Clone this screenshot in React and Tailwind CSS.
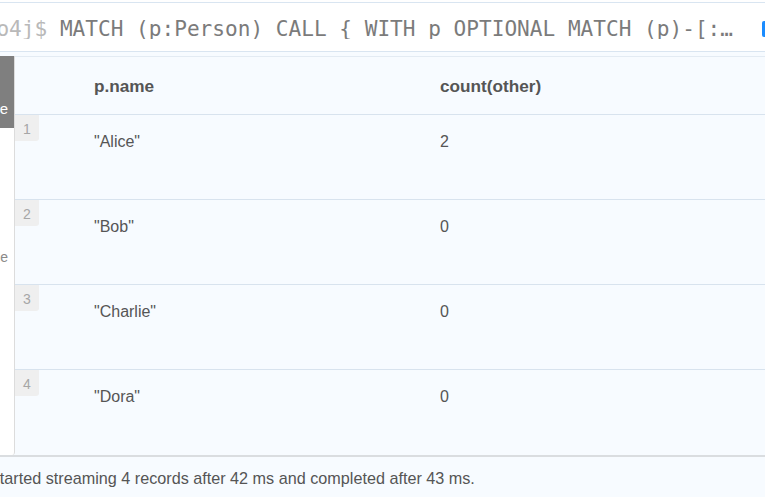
import React from 'react';

const rows = [
    { n: 1, name: '"Alice"', count: '2' },
    { n: 2, name: '"Bob"', count: '0' },
    { n: 3, name: '"Charlie"', count: '0' },
    { n: 4, name: '"Dora"', count: '0' },
];

export default function App() {
    return (
        <div className="w-[765px] h-[497px] overflow-hidden flex flex-col bg-[#f7fbff] font-['Liberation_Sans',Arial,sans-serif]">
            {/* Editor bar */}
            <div className="pt-[2px] bg-white shrink-0">
                <div className="h-[50px] border-t border-b border-[#d9e5f1] bg-white flex items-center overflow-hidden">
                    <div className="flex-1 overflow-hidden whitespace-nowrap font-['DejaVu_Sans_Mono',monospace] text-[21.1px] leading-none ml-[-29px] pt-[3px]">
                        <span className="text-[#b9b9b9]">neo4j$ </span>
                        <span className="text-[#7b7b7b]">MATCH (p:Person) CALL {'{'} WITH p OPTIONAL MATCH (p)-[:…</span>
                    </div>
                    <div className="w-[3px] h-[16px] bg-[#1a8cff] rounded-l-[2px] shrink-0 ml-[26px] mt-[4px]" />
                </div>
            </div>

            <div className="h-[4px] shrink-0" />

            {/* Main */}
            <div className="flex flex-1 min-h-0">
                <div className="w-[15px] shrink-0 flex flex-col bg-white border-r border-[#dcdcdc] rounded-br-[3px] overflow-hidden">
                    <div className="h-[72px] bg-[#7f7f7f] flex justify-end items-end pr-[6px] pb-[12px] overflow-hidden">
                        <span className="text-white text-[15px] leading-none whitespace-nowrap">Table</span>
                    </div>
                    <div className="flex justify-end pr-[6px] pt-[122px] overflow-hidden">
                        <span className="text-[#8a8a8a] text-[14px] leading-none whitespace-nowrap">Code</span>
                    </div>
                </div>

                <div className="flex-1 flex flex-col border-t border-[#e3ebf3] text-[#555] text-[16px]">
                    <div className="h-[58px] shrink-0 flex items-center border-b border-[#d8e3ee] font-bold text-[17.2px] pt-[2px]">
                        <div className="w-[79px] shrink-0" />
                        <div className="w-[346px] shrink-0">p.name</div>
                        <div>count(other)</div>
                    </div>
                    {rows.map((r, i) => (
                        <div
                            key={r.n}
                            className={`h-[85px] shrink-0 flex ${i < rows.length - 1 ? 'border-b border-[#d8e3ee]' : ''}`}
                        >
                            <div className="w-[79px] shrink-0">
                                <div className="w-[24px] h-[26px] bg-[#efefef] rounded-br-[3px] text-[#a6a6a6] text-[14px] leading-none pl-[8px] pt-[7px]">
                                    {r.n}
                                </div>
                            </div>
                            <div className="w-[346px] shrink-0 pt-[18px] leading-[18px]">{r.name}</div>
                            <div className="pt-[18px] leading-[18px]">{r.count}</div>
                        </div>
                    ))}
                </div>
            </div>

            {/* Footer */}
            <div className="h-[42px] shrink-0 border-t-2 border-[#dadde0] flex items-center overflow-hidden pt-[3px]">
                <span className="ml-[-11px] text-[16.2px] text-[#555] whitespace-nowrap">
                    Started streaming 4 records after 42 ms and completed after 43 ms.
                </span>
            </div>
        </div>
    );
}
